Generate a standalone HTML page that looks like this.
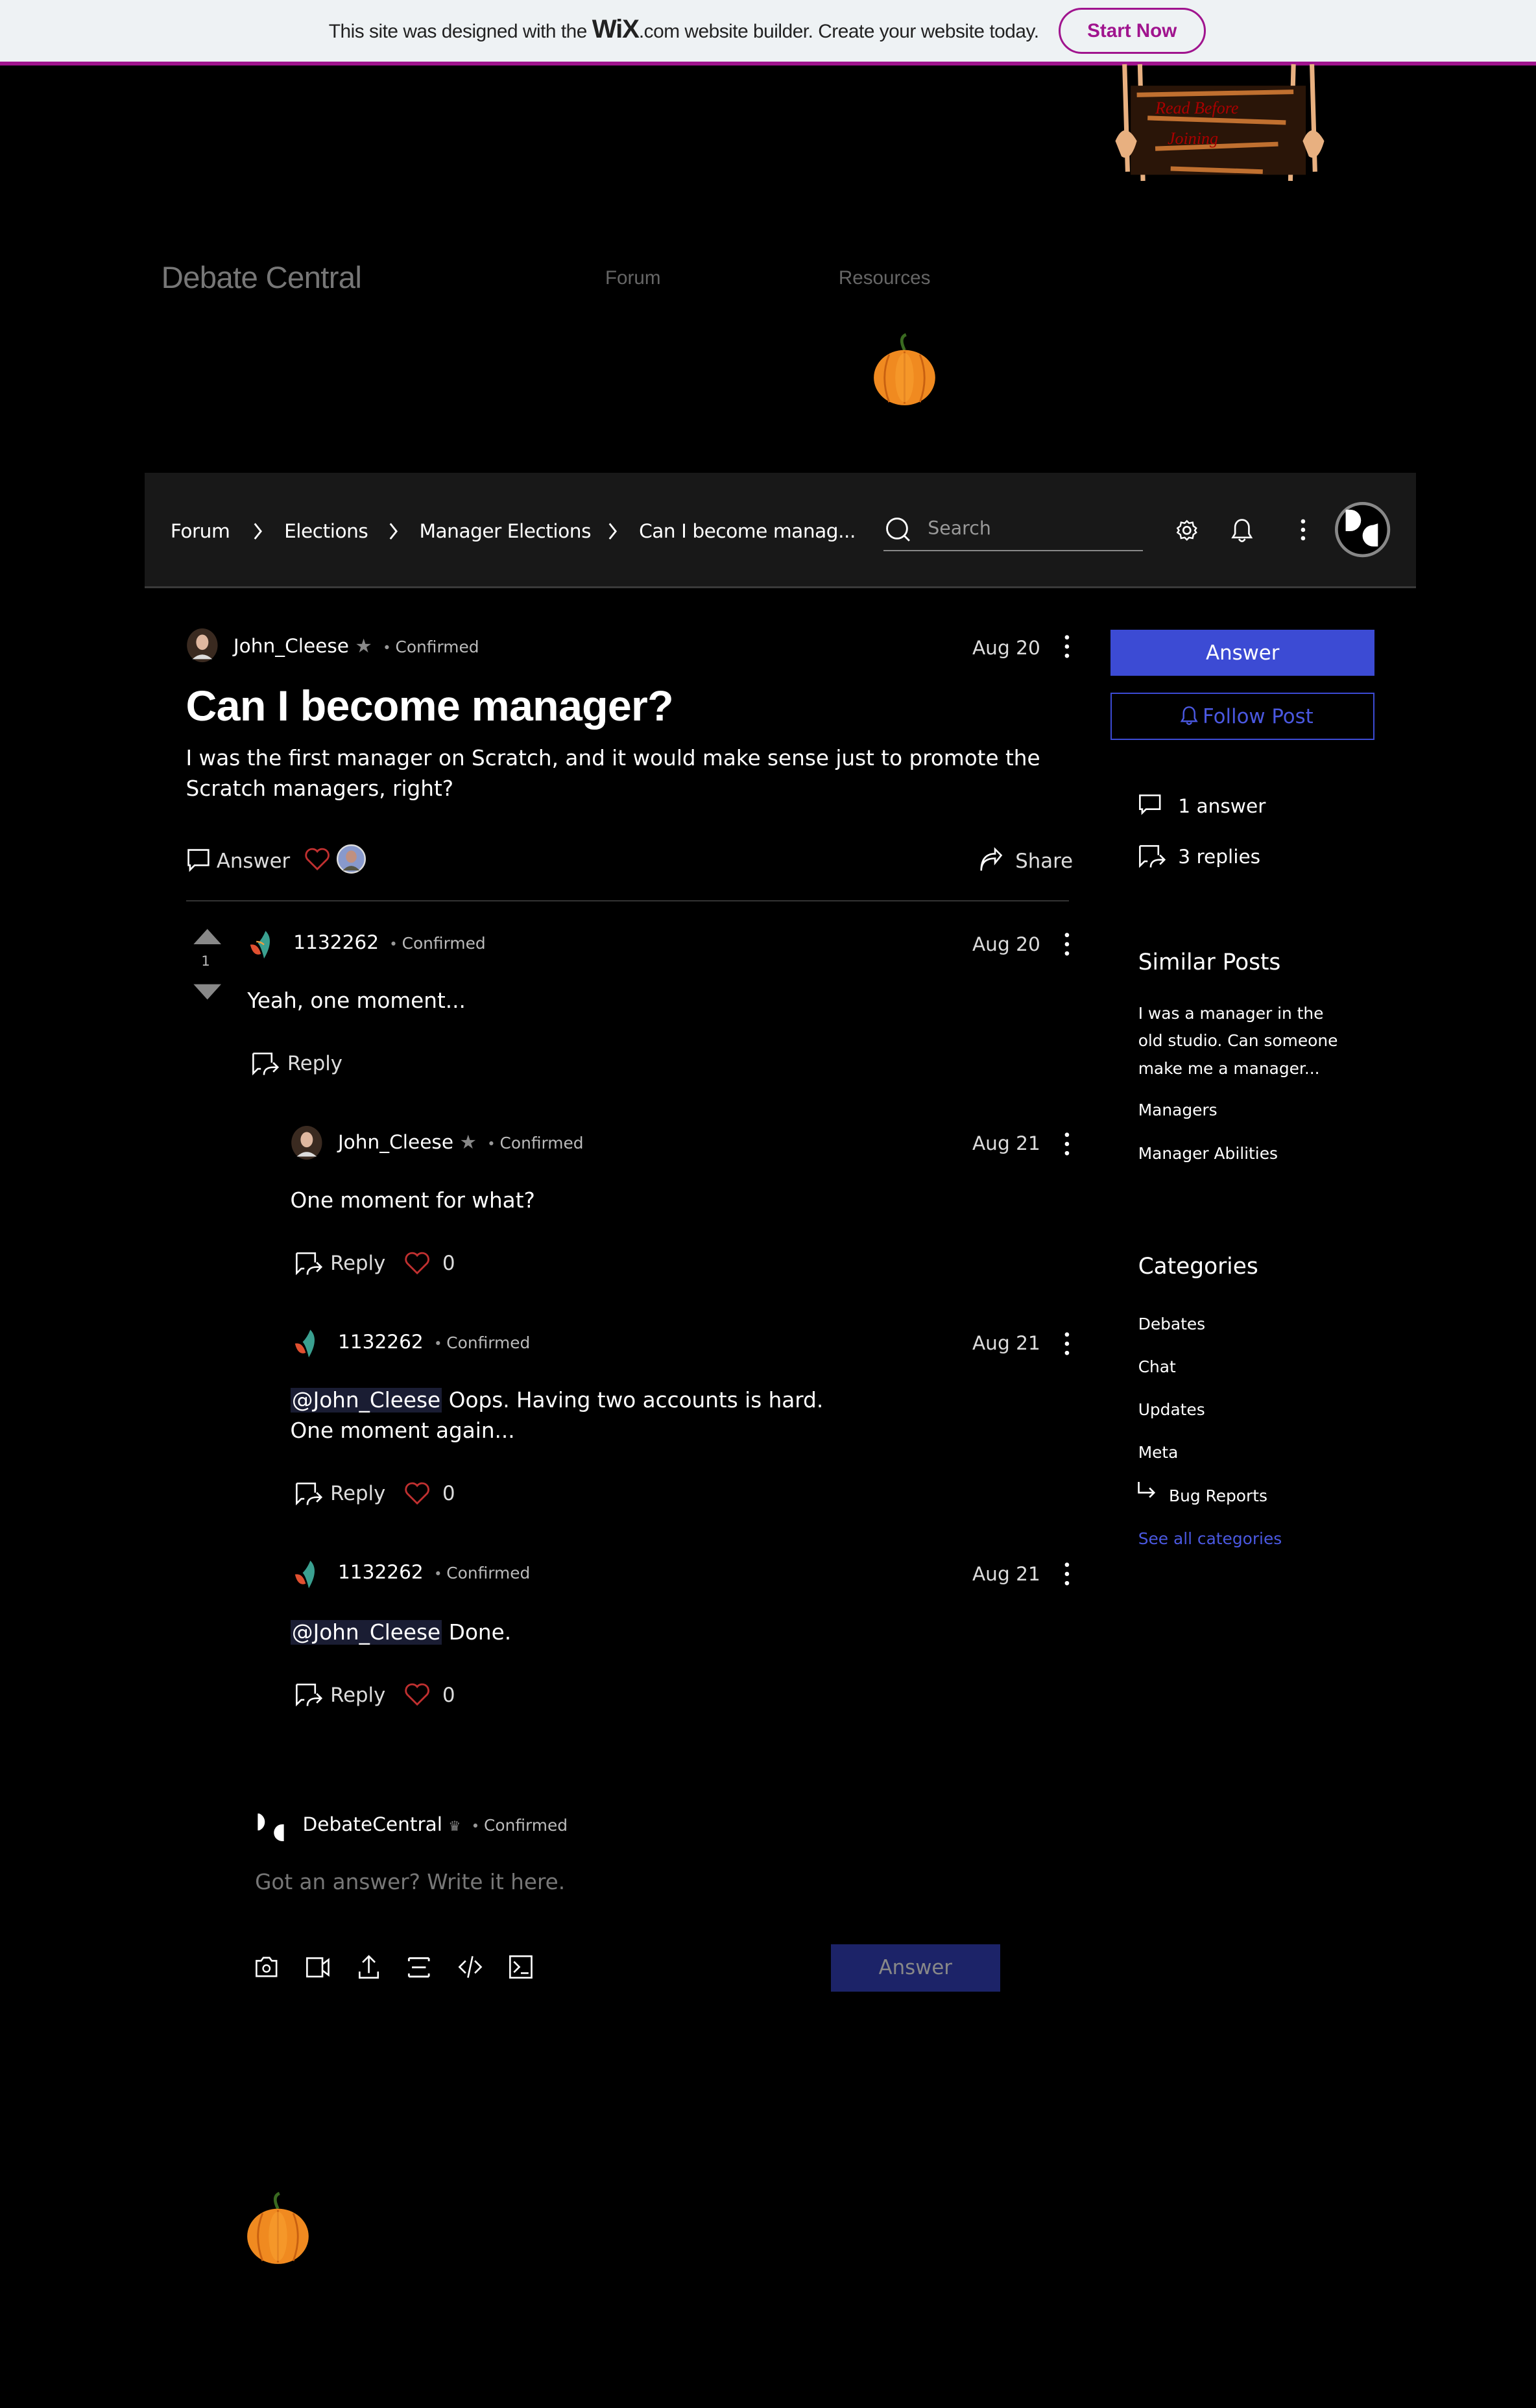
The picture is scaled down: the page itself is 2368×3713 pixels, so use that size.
<!DOCTYPE html>
<html><head><meta charset="utf-8"><style>
*{margin:0;padding:0;box-sizing:border-box}
html,body{width:2368px;height:3712px;background:#000;overflow:hidden}
#w{position:absolute;left:0;top:0;width:1000px;height:1568px;zoom:2.368;background:#000;font-family:"DejaVu Sans","Liberation Sans",sans-serif;color:#fff}
.a{position:absolute;white-space:nowrap;line-height:20px}
svg{position:absolute;overflow:visible}
.c{color:#bbb;font-size:10.5px}
.dot{color:#999;font-size:9px}
.bc{font-size:12.5px;letter-spacing:-0.2px}
</style></head><body><div id="w">
<!-- banner -->
<div style="position:absolute;left:0;top:0;width:1000px;height:40px;background:#eef2f4"></div>
<div style="position:absolute;left:0;top:40px;width:1000px;height:2.5px;background:#a0148e"></div>
<div class="a" style="left:214px;top:9px;font-family:'Liberation Sans',sans-serif;font-size:12.6px;color:#222;letter-spacing:-0.2px">This site was designed with the <b style="font-size:17px;font-weight:900;letter-spacing:-0.5px">WiX</b>.com website builder. Create your website today.</div>
<div style="position:absolute;left:689px;top:5px;width:96px;height:30px;border:1.3px solid #a0148e;border-radius:15px;color:#a0148e;font-family:'Liberation Sans',sans-serif;font-size:12.5px;font-weight:bold;text-align:center;line-height:28px">Start Now</div>
<!-- sign -->
<svg style="left:722px;top:42px" width="144" height="76" viewBox="0 0 144 76">
<path d="M10 0 L12 70 M20 0 L22 76 M120 0 L118 76 M132 0 L134 70" stroke="#e8b080" stroke-width="3" fill="none"/>
<rect x="14" y="14" width="114" height="58" fill="#2a1508"/>
<path d="M18 20 L120 18 M25 35 L115 38 M30 55 L110 52 M40 68 L100 70" stroke="#c07030" stroke-width="3"/>
<text x="30" y="32" font-family="Liberation Serif" font-style="italic" font-size="11" fill="#a00">Read Before</text>
<text x="38" y="52" font-family="Liberation Serif" font-style="italic" font-size="11" fill="#a00">Joining</text>
<path d="M4 50 q6 -14 14 0 q-4 14 -10 10 z M126 50 q6 -14 14 0 q-4 14 -10 10 z" fill="#e8b080"/>
</svg>
<!-- header -->
<div class="a" style="left:105px;top:170px;font-size:20px;line-height:22px;color:#777;font-family:'Liberation Sans',sans-serif;letter-spacing:-0.3px">Debate Central</div>
<div class="a" style="left:394px;top:171px;font-size:12.5px;color:#666;font-family:'Liberation Sans',sans-serif">Forum</div>
<div class="a" style="left:546px;top:171px;font-size:12.5px;color:#666;font-family:'Liberation Sans',sans-serif">Resources</div>
<svg style="left:566px;top:218px" width="46" height="46" viewBox="0 0 46 46"><path d="M23 10 q-4 -8 1 -10" stroke="#3a6a20" stroke-width="2" fill="none"/><ellipse cx="23" cy="28" rx="20" ry="18" fill="#f08a20"/><path d="M23 11 v34 M13 13 q-6 15 0 31 M33 13 q6 15 0 31" stroke="#c86010" stroke-width="1.2" fill="none"/><ellipse cx="23" cy="28" rx="6" ry="16" fill="#f8a030" opacity=".6"/></svg>
<!-- forum bar -->
<div style="position:absolute;left:94px;top:308px;width:828px;height:75px;background:#181818;border-bottom:1.5px solid #3a3a3a"></div>
<div class="a bc" style="left:111px;top:336px">Forum</div>
<div class="a bc" style="left:185px;top:336px">Elections</div>
<div class="a bc" style="left:273px;top:336px">Manager Elections</div>
<div class="a bc" style="left:416px;top:336px">Can I become manag...</div>
<svg style="left:164px;top:340px" width="8" height="12"><path d="M2 1 L6 6 L2 11" stroke="#fff" fill="none" stroke-width="1.2"/></svg>
<svg style="left:252px;top:340px" width="8" height="12"><path d="M2 1 L6 6 L2 11" stroke="#fff" fill="none" stroke-width="1.2"/></svg>
<svg style="left:395px;top:340px" width="8" height="12"><path d="M2 1 L6 6 L2 11" stroke="#fff" fill="none" stroke-width="1.2"/></svg>
<svg style="left:576px;top:336px" width="18" height="18"><circle cx="8" cy="8" r="6.5" stroke="#fff" fill="none" stroke-width="1.2"/><path d="M12.5 12.5 L16 16" stroke="#fff" stroke-width="1.2"/></svg>
<div class="a" style="left:604px;top:334px;font-size:12px;color:#999">Search</div>
<div style="position:absolute;left:575px;top:358px;width:169px;height:1px;background:#888"></div>
<svg style="left:765px;top:338px" width="15" height="15" viewBox="0 0 16 16"><circle cx="8" cy="8" r="2.5" stroke="#fff" fill="none" stroke-width="1.2"/><path d="M8 1.5 L9.5 3 L12 2.5 L12.5 5 L14.5 6.5 L13.5 8 L14.5 9.5 L12.5 11 L12 13.5 L9.5 13 L8 14.5 L6.5 13 L4 13.5 L3.5 11 L1.5 9.5 L2.5 8 L1.5 6.5 L3.5 5 L4 2.5 L6.5 3 Z" stroke="#fff" fill="none" stroke-width="1.1"/></svg>
<svg style="left:801px;top:337px" width="15" height="17" viewBox="0 0 15 17"><path d="M7.5 1.5 c-3 0 -4.5 2.5 -4.5 5 v4 l-1.5 2.5 h12 l-1.5 -2.5 v-4 c0 -2.5 -1.5 -5 -4.5 -5 z M5.5 14 q2 3 4 0" stroke="#fff" fill="none" stroke-width="1.1"/></svg>
<svg style="left:846px;top:337px" width="5" height="16"><circle cx="2.5" cy="2.5" r="1.4" fill="#fff"/><circle cx="2.5" cy="8" r="1.4" fill="#fff"/><circle cx="2.5" cy="13.5" r="1.4" fill="#fff"/></svg>
<svg style="left:869px;top:327px" width="36" height="36" viewBox="0 0 36 36"><circle cx="18" cy="18" r="17" fill="#000" stroke="#888" stroke-width="2"/><path d="M7 5 h3 a7 7 0 0 1 0 14 h-3 z" fill="#fff"/><path d="M28 14 v15 h-3 a7 7 0 0 1 0 -14 z" fill="#fff"/></svg>
<!-- post -->
<svg style="left:121px;top:409px" width="21" height="22"><ellipse cx="10.5" cy="11" rx="10" ry="11" fill="#3a2a20"/><ellipse cx="10.5" cy="9" rx="4" ry="5" fill="#e0b8a0"/><path d="M4 20 q6.5 -6 13 0" fill="#ddd"/></svg>
<div class="a" style="left:152px;top:411px;font-size:12.5px">John_Cleese <span style="color:#888">★</span> <span class="dot">&nbsp;•&nbsp;</span><span class="c">Confirmed</span></div>
<div class="a" style="left:633px;top:412px;font-size:12.5px;color:#ddd">Aug 20</div>
<svg style="left:692px;top:413px" width="5" height="16"><circle cx="2.5" cy="2" r="1.4" fill="#fff"/><circle cx="2.5" cy="8" r="1.4" fill="#fff"/><circle cx="2.5" cy="14" r="1.4" fill="#fff"/></svg>
<div class="a" style="left:121px;top:443px;font-size:28px;line-height:34px;font-weight:bold;font-family:'Liberation Sans',sans-serif;letter-spacing:-0.3px">Can I become manager?</div>
<div class="a" style="left:121px;top:484px;font-size:13.8px;line-height:20px;white-space:normal;width:580px">I was the first manager on Scratch, and it would make sense just to promote the Scratch managers, right?</div>
<svg style="left:121px;top:552px" width="16" height="16"><path d="M1.5 1.5 h13 v10 h-9 l-3 3 v-3 h-1 z" stroke="#fff" fill="none" stroke-width="1.1"/></svg>
<div class="a" style="left:141px;top:551px;font-size:13px;color:#ddd">Answer</div>
<svg style="left:198px;top:552px" width="17" height="15" viewBox="0 0 17 15"><path d="M8.5 14 L2 7.5 a3.6 3.6 0 0 1 6.5 -5 a3.6 3.6 0 0 1 6.5 5 z" stroke="#c03030" fill="none" stroke-width="1.2"/></svg>
<svg style="left:219px;top:550px" width="19" height="19"><circle cx="9.5" cy="9.5" r="9" fill="#8899cc" stroke="#ddd" stroke-width="1"/><ellipse cx="9.5" cy="8" rx="3.5" ry="4" fill="#c09080"/><path d="M4 17 q5.5 -6 11 0" fill="#554"/></svg>
<svg style="left:637px;top:552px" width="16" height="16"><path d="M2 15 q0 -8 9 -8 v3 l4 -5 l-4 -4 v3 q-9 0 -9 11" stroke="#fff" fill="none" stroke-width="1.1"/></svg>
<div class="a" style="left:661px;top:551px;font-size:13px;color:#ddd">Share</div>
<div style="position:absolute;left:121px;top:586px;width:575px;height:1px;background:#333"></div>
<!-- answer -->
<svg style="left:125px;top:604px" width="20" height="48"><path d="M1 11 L10 1 L19 11 Z" fill="#888"/><path d="M1 37 L10 47 L19 37 Z" fill="#888"/></svg>
<div class="a" style="left:131px;top:616px;font-size:9px;color:#bbb">1</div>
<svg style="left:161px;top:605px" width="18" height="20"><path d="M12 1 q6 6 -1 18 q-2 -8 -4 -10 q3 -3 5 -8z" fill="#3aa090"/><path d="M2 10 q5 -1 7 6 q-5 2 -7 -6z" fill="#e05030"/><path d="M6 8 q3 0 5 2" stroke="#f0a040" fill="none"/></svg>
<div class="a" style="left:191px;top:604px;font-size:12.5px">1132262 <span class="dot">&nbsp;•&nbsp;</span><span class="c">Confirmed</span></div>
<div class="a" style="left:633px;top:605px;font-size:12.5px;color:#ddd">Aug 20</div>
<svg style="left:692px;top:607px" width="5" height="16"><circle cx="2.5" cy="2" r="1.4" fill="#fff"/><circle cx="2.5" cy="8" r="1.4" fill="#fff"/><circle cx="2.5" cy="14" r="1.4" fill="#fff"/></svg>
<div class="a" style="left:161px;top:642px;font-size:13.8px">Yeah, one moment...</div>
<svg style="left:164px;top:685px" width="18" height="16"><path d="M1 1 h12 v6 M6 11 h-2 l-3 3 v-3 v-10" stroke="#fff" fill="none" stroke-width="1.1"/><path d="M8 15 q0 -5 6 -5 h3 M14 7 l3 3 l-3 3" stroke="#fff" fill="none" stroke-width="1.1"/></svg>
<div class="a" style="left:187px;top:683px;font-size:13px;color:#ddd">Reply</div>

<!-- reply 1 -->
<svg style="left:189px;top:733px" width="21" height="22"><ellipse cx="10.5" cy="11" rx="10" ry="11" fill="#3a2a20"/><ellipse cx="10.5" cy="9" rx="4" ry="5" fill="#e0b8a0"/><path d="M4 20 q6.5 -6 13 0" fill="#ddd"/></svg>
<div class="a" style="left:220px;top:734px;font-size:12.5px">John_Cleese <span style="color:#888">★</span> <span class="dot">&nbsp;•&nbsp;</span><span class="c">Confirmed</span></div>
<div class="a" style="left:633px;top:735px;font-size:12.5px;color:#ddd">Aug 21</div>
<svg style="left:692px;top:737px" width="5" height="16"><circle cx="2.5" cy="2" r="1.4" fill="#fff"/><circle cx="2.5" cy="8" r="1.4" fill="#fff"/><circle cx="2.5" cy="14" r="1.4" fill="#fff"/></svg>
<div class="a" style="left:189px;top:772px;font-size:13.8px">One moment for what?</div>
<svg style="left:192px;top:815px" width="18" height="16"><path d="M1 1 h12 v6 M6 11 h-2 l-3 3 v-3 v-10" stroke="#fff" fill="none" stroke-width="1.1"/><path d="M8 15 q0 -5 6 -5 h3 M14 7 l3 3 l-3 3" stroke="#fff" fill="none" stroke-width="1.1"/></svg>
<div class="a" style="left:215px;top:813px;font-size:13px;color:#ddd">Reply</div>
<svg style="left:263px;top:815px" width="17" height="15" viewBox="0 0 17 15"><path d="M8.5 14 L2 7.5 a3.6 3.6 0 0 1 6.5 -5 a3.6 3.6 0 0 1 6.5 5 z" stroke="#c03030" fill="none" stroke-width="1.2"/></svg>
<div class="a" style="left:288px;top:813px;font-size:13px;color:#ddd">0</div>

<!-- reply 2 -->
<svg style="left:190px;top:865px" width="18" height="20"><path d="M12 1 q6 6 -1 18 q-2 -8 -4 -10 q3 -3 5 -8z" fill="#3aa090"/><path d="M2 10 q5 -1 7 6 q-5 2 -7 -6z" fill="#e05030"/></svg>
<div class="a" style="left:220px;top:864px;font-size:12.5px">1132262 <span class="dot">&nbsp;•&nbsp;</span><span class="c">Confirmed</span></div>
<div class="a" style="left:633px;top:865px;font-size:12.5px;color:#ddd">Aug 21</div>
<svg style="left:692px;top:867px" width="5" height="16"><circle cx="2.5" cy="2" r="1.4" fill="#fff"/><circle cx="2.5" cy="8" r="1.4" fill="#fff"/><circle cx="2.5" cy="14" r="1.4" fill="#fff"/></svg>
<div class="a" style="left:189px;top:902px;font-size:13.8px"><span style="background:#1a1d33;padding:0 1px">@John_Cleese</span> Oops. Having two accounts is hard.</div>
<div class="a" style="left:189px;top:922px;font-size:13.8px">One moment again...</div>
<svg style="left:192px;top:965px" width="18" height="16"><path d="M1 1 h12 v6 M6 11 h-2 l-3 3 v-3 v-10" stroke="#fff" fill="none" stroke-width="1.1"/><path d="M8 15 q0 -5 6 -5 h3 M14 7 l3 3 l-3 3" stroke="#fff" fill="none" stroke-width="1.1"/></svg>
<div class="a" style="left:215px;top:963px;font-size:13px;color:#ddd">Reply</div>
<svg style="left:263px;top:965px" width="17" height="15" viewBox="0 0 17 15"><path d="M8.5 14 L2 7.5 a3.6 3.6 0 0 1 6.5 -5 a3.6 3.6 0 0 1 6.5 5 z" stroke="#c03030" fill="none" stroke-width="1.2"/></svg>
<div class="a" style="left:288px;top:963px;font-size:13px;color:#ddd">0</div>

<!-- reply 3 -->
<svg style="left:190px;top:1015px" width="18" height="20"><path d="M12 1 q6 6 -1 18 q-2 -8 -4 -10 q3 -3 5 -8z" fill="#3aa090"/><path d="M2 10 q5 -1 7 6 q-5 2 -7 -6z" fill="#e05030"/></svg>
<div class="a" style="left:220px;top:1014px;font-size:12.5px">1132262 <span class="dot">&nbsp;•&nbsp;</span><span class="c">Confirmed</span></div>
<div class="a" style="left:633px;top:1015px;font-size:12.5px;color:#ddd">Aug 21</div>
<svg style="left:692px;top:1017px" width="5" height="16"><circle cx="2.5" cy="2" r="1.4" fill="#fff"/><circle cx="2.5" cy="8" r="1.4" fill="#fff"/><circle cx="2.5" cy="14" r="1.4" fill="#fff"/></svg>
<div class="a" style="left:189px;top:1053px;font-size:13.8px"><span style="background:#1a1d33;padding:0 1px">@John_Cleese</span> Done.</div>
<svg style="left:192px;top:1096px" width="18" height="16"><path d="M1 1 h12 v6 M6 11 h-2 l-3 3 v-3 v-10" stroke="#fff" fill="none" stroke-width="1.1"/><path d="M8 15 q0 -5 6 -5 h3 M14 7 l3 3 l-3 3" stroke="#fff" fill="none" stroke-width="1.1"/></svg>
<div class="a" style="left:215px;top:1094px;font-size:13px;color:#ddd">Reply</div>
<svg style="left:263px;top:1096px" width="17" height="15" viewBox="0 0 17 15"><path d="M8.5 14 L2 7.5 a3.6 3.6 0 0 1 6.5 -5 a3.6 3.6 0 0 1 6.5 5 z" stroke="#c03030" fill="none" stroke-width="1.2"/></svg>
<div class="a" style="left:288px;top:1094px;font-size:13px;color:#ddd">0</div>

<!-- composer -->
<svg style="left:167px;top:1180px" width="20" height="20"><path d="M1 1 h1 a6 6 0 0 1 0 11 h-1 z" fill="#fff"/><path d="M18 8 v11 h-1 a5.5 5.5 0 0 1 0 -11 z" fill="#fff"/></svg>
<div class="a" style="left:197px;top:1178px;font-size:12.5px">DebateCentral <span style="color:#888;font-size:9px">♛</span> <span class="dot">&nbsp;•&nbsp;</span><span class="c">Confirmed</span></div>
<div class="a" style="left:166px;top:1216px;font-size:13.8px;color:#777">Got an answer? Write it here.</div>
<svg style="left:166px;top:1273px" width="16" height="16"><path d="M1 4 h3 l1.5 -2 h4 l1.5 2 h3 v10 h-13 z" stroke="#fff" fill="none" stroke-width="1.1"/><circle cx="7.5" cy="9" r="2.2" stroke="#fff" fill="none"/></svg>
<svg style="left:199px;top:1274px" width="17" height="14"><rect x="1" y="1" width="10" height="12" stroke="#fff" fill="none" stroke-width="1.1"/><path d="M11 5 l4 -3 v10 l-4 -3" stroke="#fff" fill="none" stroke-width="1.1"/></svg>
<svg style="left:233px;top:1273px" width="14" height="16"><path d="M7 12 v-11 M3 5 l4 -4 l4 4 M1 11 v4 h12 v-4" stroke="#fff" fill="none" stroke-width="1.1"/></svg>
<svg style="left:265px;top:1274px" width="15" height="14"><path d="M1 1 h13 M1 13 h13 M1 1 v2 M14 1 v2 M1 13 v-2 M14 13 v-2 M3 7 h9" stroke="#fff" fill="none" stroke-width="1.2"/></svg>
<svg style="left:298px;top:1273px" width="16" height="16"><path d="M5 4 l-4 4 l4 4 M11 4 l4 4 l-4 4 M9.5 1 l-3 14" stroke="#fff" fill="none" stroke-width="1.1"/></svg>
<svg style="left:331px;top:1273px" width="16" height="16"><rect x="1" y="1" width="14" height="14" stroke="#fff" fill="none" stroke-width="1.1"/><path d="M3.5 4.5 l3.5 3.5 l-3.5 3.5 M8 12 h5" stroke="#fff" fill="none" stroke-width="1.1"/></svg>
<div style="position:absolute;left:541px;top:1266px;width:110px;height:31px;background:#1c2368;color:#888;font-size:13px;text-align:center;line-height:31px">Answer</div>
<svg style="left:158px;top:1428px" width="46" height="46" viewBox="0 0 46 46"><path d="M23 10 q-4 -8 1 -10" stroke="#3a6a20" stroke-width="2" fill="none"/><ellipse cx="23" cy="28" rx="20" ry="18" fill="#f08a20"/><path d="M23 11 v34 M13 13 q-6 15 0 31 M33 13 q6 15 0 31" stroke="#c86010" stroke-width="1.2" fill="none"/><ellipse cx="23" cy="28" rx="6" ry="16" fill="#f8a030" opacity=".6"/></svg>

<!-- sidebar -->
<div style="position:absolute;left:723px;top:410px;width:172px;height:30px;background:#3c4bd4;text-align:center;line-height:31px;font-size:13px">Answer</div>
<div style="position:absolute;left:723px;top:451px;width:172px;height:31px;border:1px solid #3c4bd4;text-align:center;line-height:30px;font-size:13px;color:#4a58e0"><span style="display:inline-block;width:20px"></span>Follow Post</div>
<svg style="left:768px;top:459px" width="12" height="14" viewBox="0 0 15 17"><path d="M7.5 1.5 c-3 0 -4.5 2.5 -4.5 5 v4 l-1.5 2.5 h12 l-1.5 -2.5 v-4 c0 -2.5 -1.5 -5 -4.5 -5 z M5.5 14 q2 3 4 0" stroke="#4a58e0" fill="none" stroke-width="1.3"/></svg>
<svg style="left:741px;top:517px" width="16" height="15"><path d="M1 1 h13 v9 h-9 l-2.5 2.5 v-2.5 h-1.5 z" stroke="#fff" fill="none" stroke-width="1.1"/></svg>
<div class="a" style="left:767px;top:515px;font-size:12.5px">1 answer</div>
<svg style="left:741px;top:550px" width="18" height="16"><path d="M1 1 h12 v6 M6 11 h-2 l-3 3 v-3 v-10" stroke="#fff" fill="none" stroke-width="1.1"/><path d="M8 15 q0 -5 6 -5 h3 M14 7 l3 3 l-3 3" stroke="#fff" fill="none" stroke-width="1.1"/></svg>
<div class="a" style="left:767px;top:548px;font-size:12.5px">3 replies</div>
<div class="a" style="left:741px;top:617px;font-size:14.5px">Similar Posts</div>
<div class="a" style="left:741px;top:651px;font-size:10.5px;line-height:18px;white-space:normal;width:135px">I was a manager in the old studio. Can someone make me a manager...</div>
<div class="a" style="left:741px;top:713px;font-size:10.5px">Managers</div>
<div class="a" style="left:741px;top:741px;font-size:10.5px">Manager Abilities</div>
<div class="a" style="left:741px;top:815px;font-size:14.5px">Categories</div>
<div class="a" style="left:741px;top:852px;font-size:10.5px">Debates</div>
<div class="a" style="left:741px;top:880px;font-size:10.5px">Chat</div>
<div class="a" style="left:741px;top:908px;font-size:10.5px">Updates</div>
<div class="a" style="left:741px;top:936px;font-size:10.5px">Meta</div>
<svg style="left:740px;top:965px" width="13" height="12"><path d="M1.5 0 v7 h10 M8.5 4 l3 3 l-3 3" stroke="#fff" fill="none" stroke-width="1.1"/></svg>
<div class="a" style="left:761px;top:964px;font-size:10.5px">Bug Reports</div>
<div class="a" style="left:741px;top:992px;font-size:10.5px;color:#4a58e0">See all categories</div>
</div></body></html>
